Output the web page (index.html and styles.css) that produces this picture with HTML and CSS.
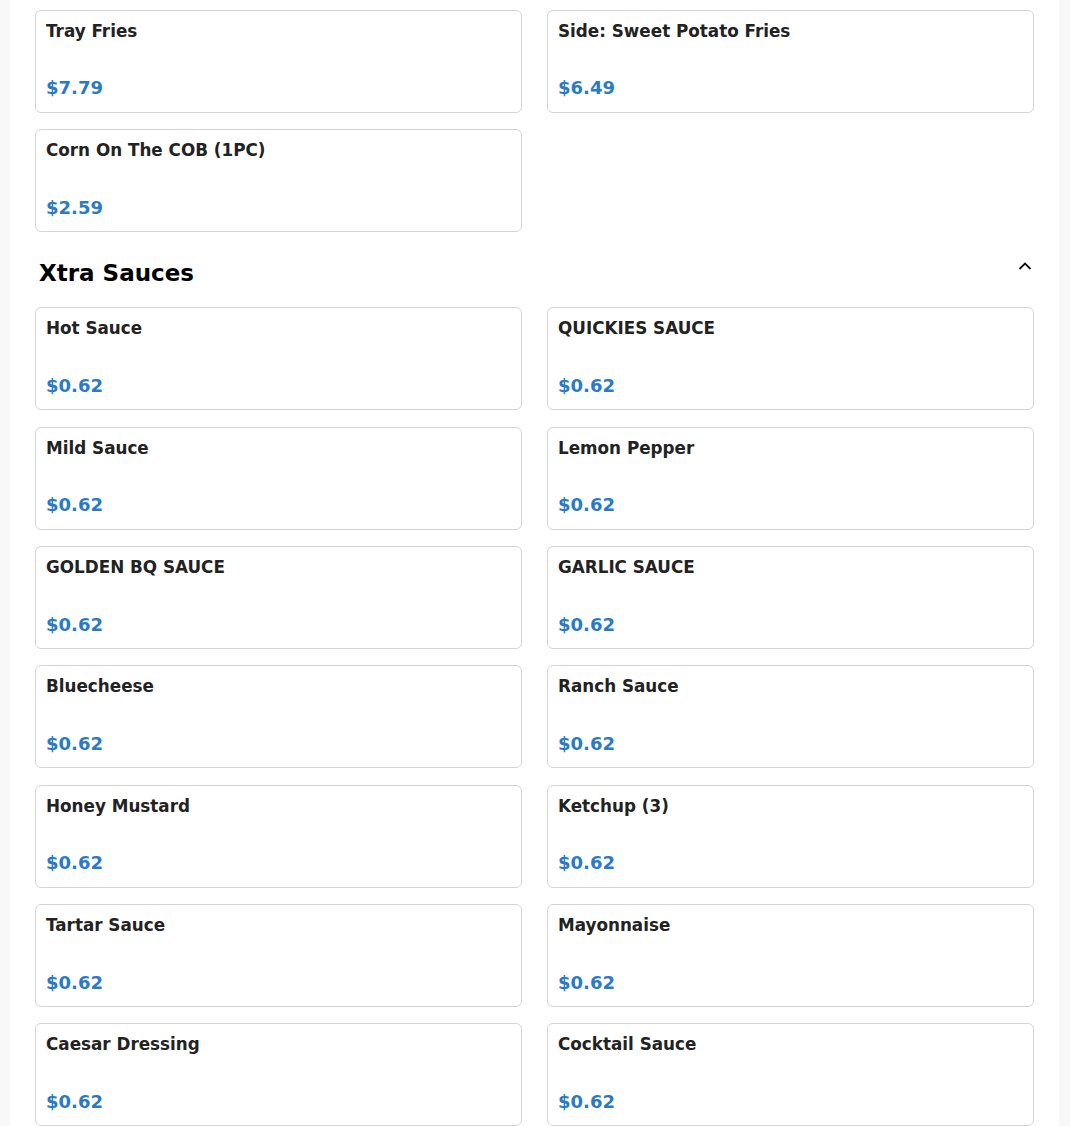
FILE: index.html
```html
<!DOCTYPE html>
<html lang="en">
<head>
    <meta charset="utf-8">
    <title>Menu</title>
    <link rel="stylesheet" href="styles.css">
</head>
<body>
    <div class="menu">
        <div class="m_grid">
            <a href="#none" class="m_item">
                <span class="m_name">Tray Fries</span>
                <span class="m_price">$7.79</span>
            </a>
            <a href="#none" class="m_item">
                <span class="m_name">Side: Sweet Potato Fries</span>
                <span class="m_price">$6.49</span>
            </a>
            <a href="#none" class="m_item">
                <span class="m_name">Corn On The COB (1PC)</span>
                <span class="m_price">$2.59</span>
            </a>
        </div>

        <div class="m_section">
            <h2>Xtra Sauces</h2>
            <svg class="m_toggle" width="14" height="14" viewBox="0 0 14 14">
                <path d="M1.5 10 L7 4.5 L12.5 10" fill="none" stroke="#111" stroke-width="1.8"/>
            </svg>
        </div>

        <div class="m_grid">
            <a href="#none" class="m_item">
                <span class="m_name">Hot Sauce</span>
                <span class="m_price">$0.62</span>
            </a>
            <a href="#none" class="m_item">
                <span class="m_name">QUICKIES SAUCE</span>
                <span class="m_price">$0.62</span>
            </a>
            <a href="#none" class="m_item">
                <span class="m_name">Mild Sauce</span>
                <span class="m_price">$0.62</span>
            </a>
            <a href="#none" class="m_item">
                <span class="m_name">Lemon Pepper</span>
                <span class="m_price">$0.62</span>
            </a>
            <a href="#none" class="m_item">
                <span class="m_name">GOLDEN BQ SAUCE</span>
                <span class="m_price">$0.62</span>
            </a>
            <a href="#none" class="m_item">
                <span class="m_name">GARLIC SAUCE</span>
                <span class="m_price">$0.62</span>
            </a>
            <a href="#none" class="m_item">
                <span class="m_name">Bluecheese</span>
                <span class="m_price">$0.62</span>
            </a>
            <a href="#none" class="m_item">
                <span class="m_name">Ranch Sauce</span>
                <span class="m_price">$0.62</span>
            </a>
            <a href="#none" class="m_item">
                <span class="m_name">Honey Mustard</span>
                <span class="m_price">$0.62</span>
            </a>
            <a href="#none" class="m_item">
                <span class="m_name">Ketchup (3)</span>
                <span class="m_price">$0.62</span>
            </a>
            <a href="#none" class="m_item">
                <span class="m_name">Tartar Sauce</span>
                <span class="m_price">$0.62</span>
            </a>
            <a href="#none" class="m_item">
                <span class="m_name">Mayonnaise</span>
                <span class="m_price">$0.62</span>
            </a>
            <a href="#none" class="m_item">
                <span class="m_name">Caesar Dressing</span>
                <span class="m_price">$0.62</span>
            </a>
            <a href="#none" class="m_item">
                <span class="m_name">Cocktail Sauce</span>
                <span class="m_price">$0.62</span>
            </a>
        </div>
    </div>
</body>
</html>
```

FILE: styles.css
```css
body {margin: 0px; padding: 0px; background-color: #f8f8f8; font-family: "DejaVu Sans", sans-serif;}
a {text-decoration: none; color: inherit;}
/* =============================================================== */
.menu {
    background-color: #fff;
    margin: 0px 11px 0px 10px;
    padding: 9.5px 25px 20px;
    min-height: 1126px;
    box-sizing: border-box;
}
.m_grid {
    display: grid;
    grid-template-columns: 1fr 1fr;
    column-gap: 25px;
    row-gap: 16.3px;
}
.m_item {
    display: flex;
    flex-direction: column;
    justify-content: space-between;
    height: 103px;
    padding: 10px 10px 13.3px;
    border: 1px solid #d4d4d4;
    border-radius: 6px;
    box-sizing: border-box;
}
.m_name {
    font-size: 16.8px;
    font-weight: bold;
    color: #222;
}
.m_price {
    font-size: 18px;
    font-weight: bold;
    color: #2a7bc4;
}
/* =============================================================== */
.m_section {
    display: flex;
    align-items: center;
    justify-content: space-between;
    height: 75.7px;
    padding: 7px 2px 0px 4px;
    box-sizing: border-box;
}
.m_section h2 {
    margin: 0px;
    font-size: 23px;
    font-weight: bold;
    color: #000;
}
.m_toggle {
    margin-top: -15px;
}
```
